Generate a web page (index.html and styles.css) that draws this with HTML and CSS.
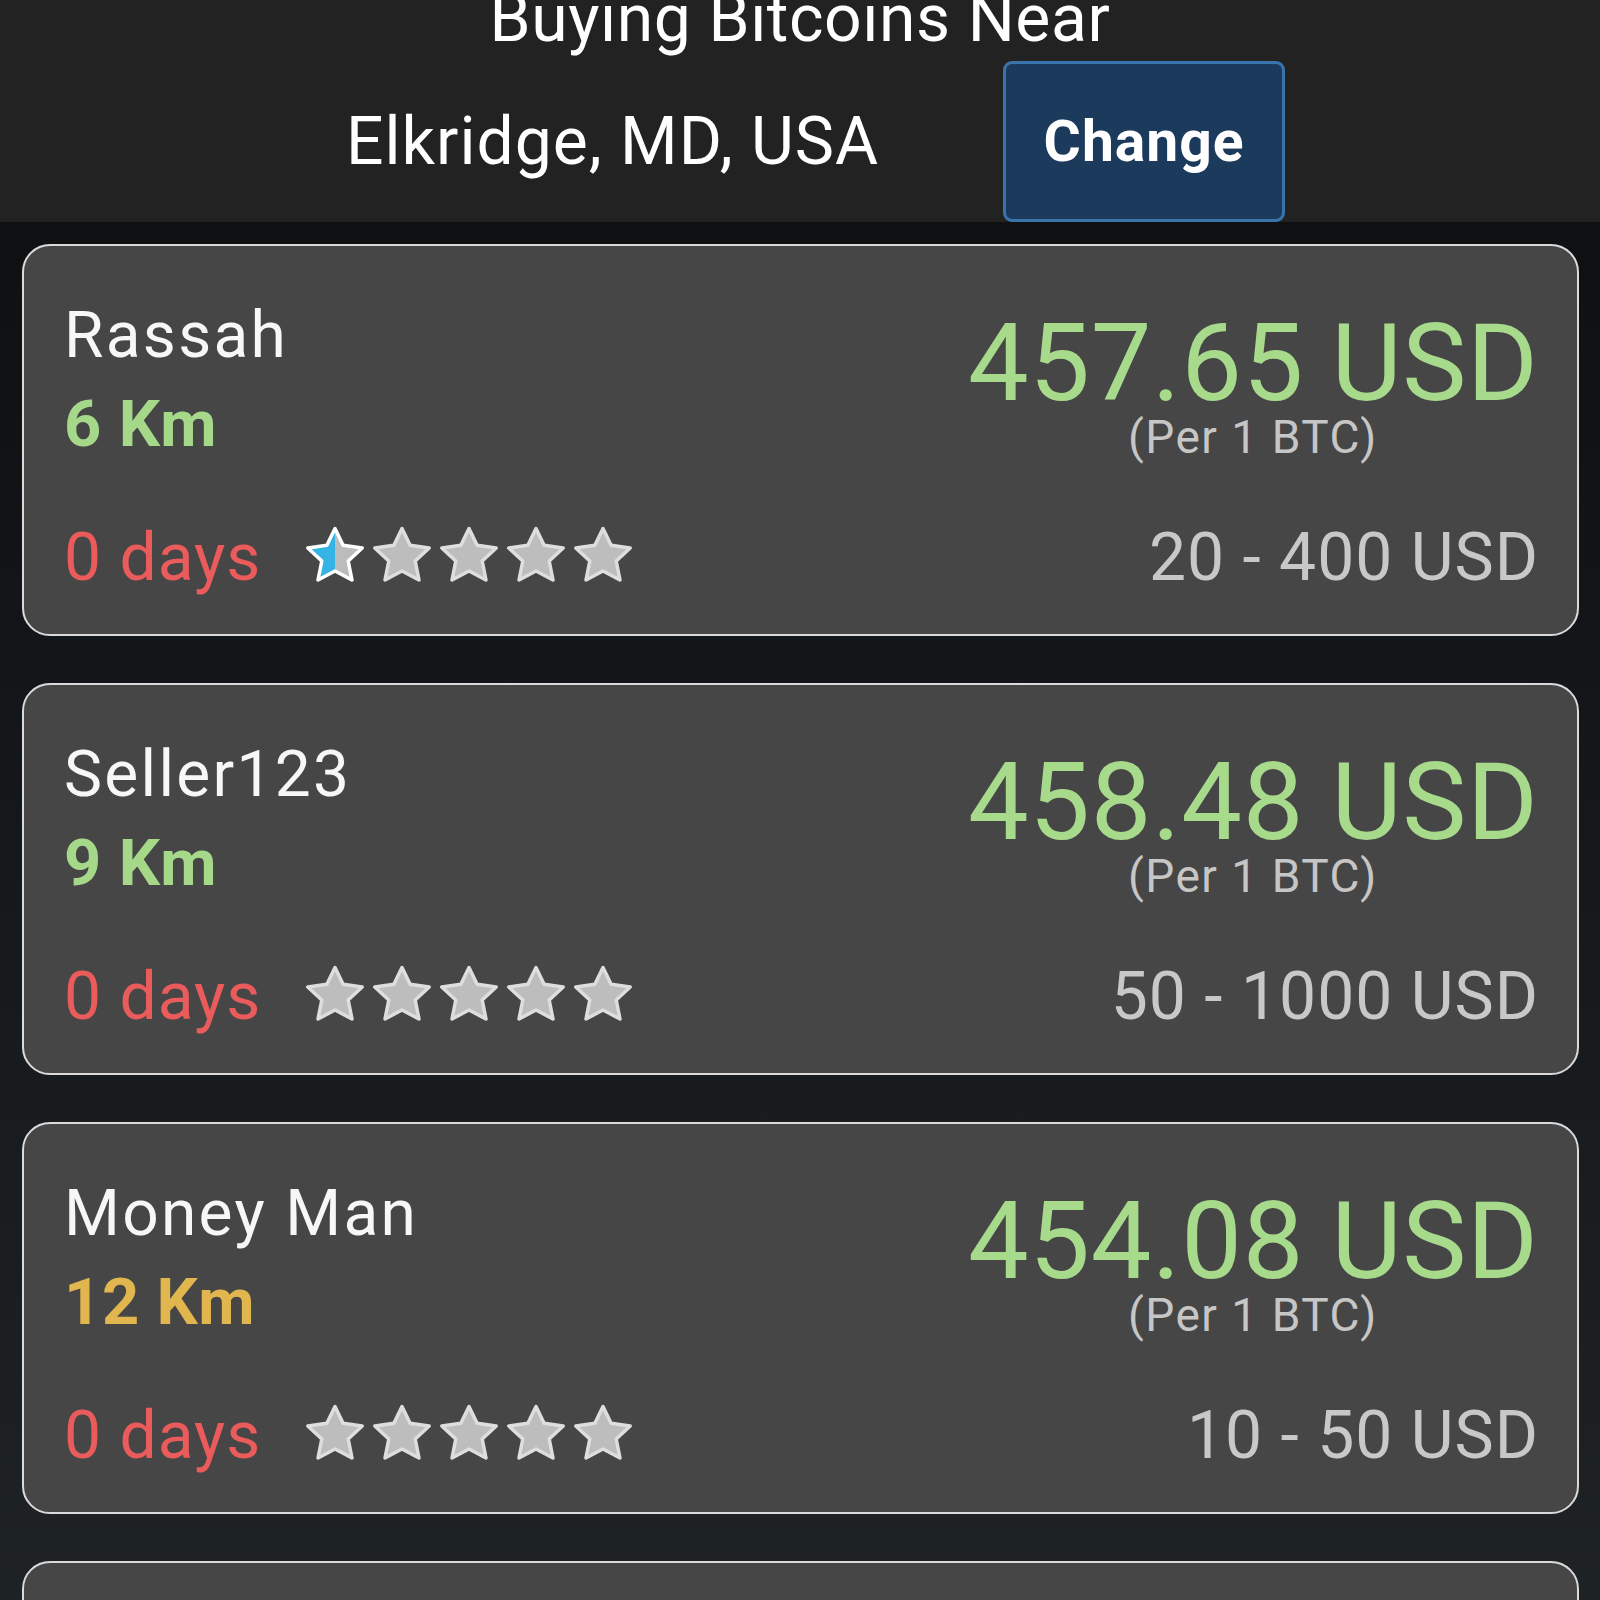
FILE: index.html
```html
<!DOCTYPE html>
<html lang="en">
<head>
<meta charset="utf-8">
<title>Buying Bitcoins Near</title>
<link rel="stylesheet" href="styles.css">
</head>
<body>
<div class="screen">
  <header class="header">
    <h1 class="title">Buying Bitcoins Near</h1>
    <div class="location-row">
      <span class="location">Elkridge, MD, USA</span>
      <button class="change-btn" type="button">Change</button>
    </div>
  </header>
  <svg class="defs" width="0" height="0" aria-hidden="true">
    <defs>
      <linearGradient id="half">
        <stop offset="0.5" stop-color="#35b3e4"/>
        <stop offset="0.5" stop-color="#bcbcbc"/>
      </linearGradient>
      <polygon id="star" points="31,2.5 39.1,19.3 58.2,22 44.2,35 48,54 31,45 14,54 17.8,35 3.8,22 22.9,19.3"/>
    </defs>
  </svg>
  <main class="list">
    <article class="card">
      <div class="top">
        <div class="seller">
          <div class="name">Rassah</div>
          <div class="dist near">6 Km</div>
        </div>
        <div class="price-box">
          <div class="price">457.65 USD</div>
          <div class="per">(Per 1 BTC)</div>
        </div>
      </div>
      <div class="bottom">
        <div class="rating">
          <span class="days">0 days</span>
          <span class="stars">
            <svg class="star" viewBox="0 0 62 58"><use href="#star" class="s-half"/></svg>
            <svg class="star" viewBox="0 0 62 58"><use href="#star" class="s-off"/></svg>
            <svg class="star" viewBox="0 0 62 58"><use href="#star" class="s-off"/></svg>
            <svg class="star" viewBox="0 0 62 58"><use href="#star" class="s-off"/></svg>
            <svg class="star" viewBox="0 0 62 58"><use href="#star" class="s-off"/></svg>
          </span>
        </div>
        <div class="range">20 - 400 USD</div>
      </div>
    </article>

    <article class="card">
      <div class="top">
        <div class="seller">
          <div class="name">Seller123</div>
          <div class="dist near">9 Km</div>
        </div>
        <div class="price-box">
          <div class="price">458.48 USD</div>
          <div class="per">(Per 1 BTC)</div>
        </div>
      </div>
      <div class="bottom">
        <div class="rating">
          <span class="days">0 days</span>
          <span class="stars">
            <svg class="star" viewBox="0 0 62 58"><use href="#star" class="s-off"/></svg>
            <svg class="star" viewBox="0 0 62 58"><use href="#star" class="s-off"/></svg>
            <svg class="star" viewBox="0 0 62 58"><use href="#star" class="s-off"/></svg>
            <svg class="star" viewBox="0 0 62 58"><use href="#star" class="s-off"/></svg>
            <svg class="star" viewBox="0 0 62 58"><use href="#star" class="s-off"/></svg>
          </span>
        </div>
        <div class="range">50 - 1000 USD</div>
      </div>
    </article>

    <article class="card">
      <div class="top">
        <div class="seller">
          <div class="name">Money Man</div>
          <div class="dist mid">12 Km</div>
        </div>
        <div class="price-box">
          <div class="price">454.08 USD</div>
          <div class="per">(Per 1 BTC)</div>
        </div>
      </div>
      <div class="bottom">
        <div class="rating">
          <span class="days">0 days</span>
          <span class="stars">
            <svg class="star" viewBox="0 0 62 58"><use href="#star" class="s-off"/></svg>
            <svg class="star" viewBox="0 0 62 58"><use href="#star" class="s-off"/></svg>
            <svg class="star" viewBox="0 0 62 58"><use href="#star" class="s-off"/></svg>
            <svg class="star" viewBox="0 0 62 58"><use href="#star" class="s-off"/></svg>
            <svg class="star" viewBox="0 0 62 58"><use href="#star" class="s-off"/></svg>
          </span>
        </div>
        <div class="range">10 - 50 USD</div>
      </div>
    </article>

    <article class="card"></article>
  </main>
</div>
</body>
</html>
```

FILE: styles.css
```css
* { box-sizing: border-box; }

html, body {
  margin: 0;
  padding: 0;
  background: #222222;
}

body {
  font-family: Roboto, "Liberation Sans", sans-serif;
  color: #f4f4f4;
}

.screen {
  width: 1600px;
  height: 1600px;
  overflow: hidden;
  display: flex;
  flex-direction: column;
}

.defs {
  position: absolute;
  width: 0;
  height: 0;
}

/* Header */
.header {
  height: 222px;
  flex: none;
  background: #222222;
  display: flex;
  flex-direction: column;
}

.title {
  margin: -14px 0 0;
  font-size: 66px;
  line-height: 66px;
  font-weight: 400;
  letter-spacing: 0.6px;
  text-align: center;
  color: #ffffff;
}

.location-row {
  margin-top: 9px;
  display: flex;
  align-items: center;
  padding-left: 346px;
  gap: 124px;
}

.location {
  font-size: 66px;
  line-height: 66px;
  letter-spacing: 1px;
  color: #ffffff;
}

.change-btn {
  width: 282px;
  height: 161px;
  border: 3px solid #3a74ad;
  border-radius: 9px;
  background: #1c3a5b;
  color: #ffffff;
  font-family: Roboto, "Liberation Sans", sans-serif;
  font-weight: 700;
  font-size: 57px;
  letter-spacing: 1px;
  padding: 0;
}

/* List */
.list {
  flex: 1;
  background: linear-gradient(#0e1012 0%, #15181b 35%, #22272a 100%);
  padding: 22px 21px 0 22px;
  display: flex;
  flex-direction: column;
  gap: 47px;
}

.card {
  flex: none;
  height: 392px;
  background: #464646;
  border: 2px solid #dadada;
  border-radius: 28px;
  padding: 58px 39px 43px 40px;
  display: flex;
  flex-direction: column;
  justify-content: space-between;
}

.top {
  display: flex;
  justify-content: space-between;
  align-items: flex-start;
}

.name {
  font-size: 64px;
  line-height: 64px;
  letter-spacing: 2.3px;
  color: #f7f7f7;
}

.dist {
  margin-top: 24px;
  font-size: 65px;
  line-height: 65px;
  letter-spacing: 0.6px;
  font-weight: 700;
}

.near { color: #a6d88a; }
.mid { color: #e1b64e; }

.price-box {
  margin-top: 5px;
  display: flex;
  flex-direction: column;
  align-items: center;
}

.price {
  font-size: 108px;
  line-height: 108px;
  letter-spacing: 0.7px;
  margin-right: -0.7px;
  color: #a8da8c;
}

.per {
  margin-top: -3px;
  font-size: 46px;
  line-height: 46px;
  letter-spacing: 1.5px;
  color: #c6c6c6;
}

.bottom {
  display: flex;
  justify-content: space-between;
  align-items: flex-start;
}

.rating {
  display: flex;
  align-items: flex-start;
}

.days {
  font-size: 66px;
  line-height: 66px;
  letter-spacing: 1px;
  color: #ea5b5b;
}

.stars {
  margin-left: 43px;
  margin-top: 1px;
  display: flex;
  gap: 5px;
}

.star {
  width: 62px;
  height: 58px;
  display: block;
  overflow: visible;
}

.s-off {
  fill: #bdbdbd;
  stroke: #dedede;
  stroke-width: 3.5;
  stroke-linejoin: round;
}

.s-half {
  fill: url(#half);
  stroke: #ffffff;
  stroke-width: 3.5;
  stroke-linejoin: round;
}

.range {
  font-size: 66px;
  line-height: 66px;
  letter-spacing: 1px;
  margin-right: -1px;
  color: #c8c8c8;
}
```
